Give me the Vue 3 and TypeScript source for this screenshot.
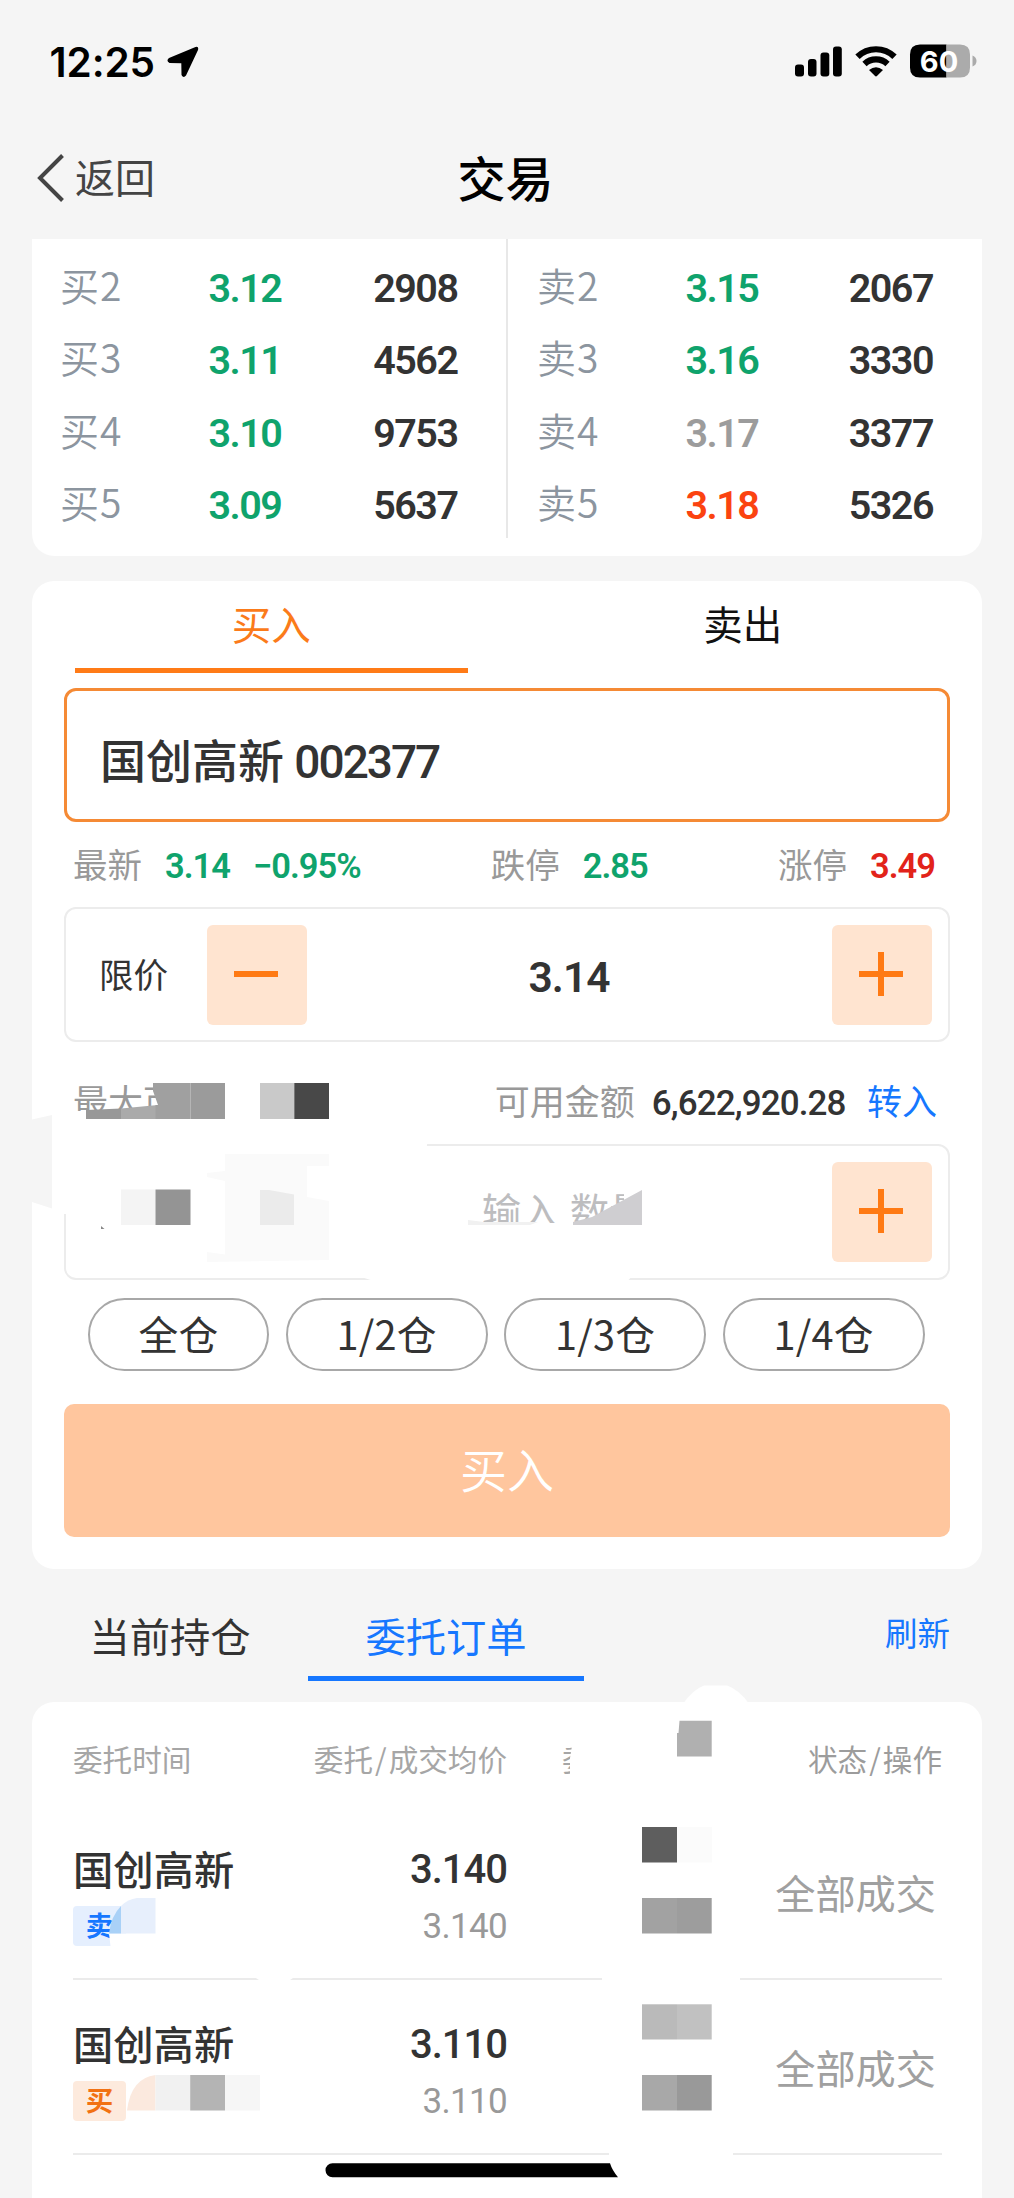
<script setup lang="ts">
interface Level {
  label: string
  price: string
  volume: string
  tone: 'down' | 'flat' | 'up'
}

interface Order {
  name: string
  side: '买' | '卖'
  price: string
  average: string
  status: string
}

interface Block {
  x: number
  y: number
  w: number
  h: number
  fill: string
}

const bids: Level[] = [
  { label: '买2', price: '3.12', volume: '2908', tone: 'down' },
  { label: '买3', price: '3.11', volume: '4562', tone: 'down' },
  { label: '买4', price: '3.10', volume: '9753', tone: 'down' },
  { label: '买5', price: '3.09', volume: '5637', tone: 'down' },
]

const asks: Level[] = [
  { label: '卖2', price: '3.15', volume: '2067', tone: 'down' },
  { label: '卖3', price: '3.16', volume: '3330', tone: 'down' },
  { label: '卖4', price: '3.17', volume: '3377', tone: 'flat' },
  { label: '卖5', price: '3.18', volume: '5326', tone: 'up' },
]

const portions: string[] = ['全仓', '1/2仓', '1/3仓', '1/4仓']

const orders: Order[] = [
  { name: '国创高新', side: '卖', price: '3.140', average: '3.140', status: '全部成交' },
  { name: '国创高新', side: '买', price: '3.110', average: '3.110', status: '全部成交' },
]

// Privacy mosaic tiles
const tiles: Block[] = [
  { x: 190.5, y: 1083, w: 34.5, h: 36, fill: '#9b9b9b' },
  { x: 260, y: 1083, w: 34.3, h: 36, fill: '#c9c9c9' },
  { x: 294.3, y: 1083, w: 34.7, h: 36, fill: '#484848' },
  { x: 121, y: 1189.5, w: 34.5, h: 35.5, fill: '#f4f4f4' },
  { x: 155.5, y: 1189.5, w: 35, h: 35.5, fill: '#949494' },
  { x: 642, y: 1827, w: 35, h: 35.5, fill: '#5e5e5e' },
  { x: 677, y: 1827, w: 35, h: 35.5, fill: '#fbfbfb' },
  { x: 642, y: 1898, w: 35, h: 35.5, fill: '#a2a2a2' },
  { x: 677, y: 1898, w: 34.7, h: 35.5, fill: '#9d9d9d' },
  { x: 642, y: 2004.3, w: 35, h: 35.2, fill: '#bababa' },
  { x: 677, y: 2004.3, w: 34.7, h: 35.2, fill: '#c1c1c1' },
  { x: 642, y: 2075, w: 35, h: 35.5, fill: '#a8a8a8' },
  { x: 677, y: 2075, w: 34.7, h: 35.5, fill: '#999999' },
  { x: 155.5, y: 2075, w: 34.7, h: 35.5, fill: '#f1f1f1' },
  { x: 190.2, y: 2075, w: 34.8, h: 35.5, fill: '#b4b4b4' },
  { x: 225, y: 2075, w: 35, h: 35.5, fill: '#f6f6f6' },
]
</script>

<template>
  <main class="screen">
    <header class="status">
      <span class="clock">12:25</span>
      <svg class="arrow" width="32" height="32" viewBox="0 0 32 32">
        <path d="M28.5 1 Q32 0 31 4 L19 29.5 Q16.5 32.5 14.5 29 L14.3 17.3 L2.5 17 Q-1.3 15 2 12 Z" />
      </svg>
      <svg class="radio" width="182" height="36" viewBox="0 0 182 36">
        <rect x="0" y="20.500" width="9" height="12" rx="3" />
        <rect x="13" y="15" width="8.500" height="17.500" rx="3" />
        <rect x="25.500" y="8.500" width="8.800" height="24" rx="3" />
        <rect x="38" y="2.500" width="8.800" height="30" rx="3" />
        <g fill="none" stroke="#000" stroke-width="6.200">
          <path d="M62.500 12.800 A26.500 26.500 0 0 1 99.500 12.800" />
          <path d="M69.500 20 A16.800 16.800 0 0 1 92.500 20" />
        </g>
        <path d="M74 26 Q81 20.500 88 26 L82.200 31.800 Q81 33 79.800 31.800 Z" />
        <path d="M125 0.500 H151.500 V33.500 H125 Q115 33.500 115 23.500 V10.500 Q115 0.500 125 0.500 Z" />
        <path d="M151.500 0.500 H165 Q175 0.500 175 10.500 V23.500 Q175 33.500 165 33.500 H151.500 Z" fill="#ababab" />
        <path d="M177.500 11.500 Q181.500 13 181.500 17 Q181.500 21 177.500 22.500 Z" fill="#ababab" />
        <text x="144" y="28" text-anchor="middle" class="charge">60</text>
      </svg>
    </header>

    <nav class="nav">
      <span class="back">
        <svg width="28" height="48" viewBox="0 0 28 48">
          <path d="M25.500 1.500 L3 24 L25.500 46.500" fill="none" stroke="#444" stroke-width="4" />
        </svg>
        <span>返回</span>
      </span>
      <h1>交易</h1>
    </nav>

    <section class="book">
      <div class="side bids">
        <div v-for="l in bids" :key="l.label" class="level">
          <span class="lv">{{ l.label }}</span>
          <span class="num" :class="l.tone">{{ l.price }}</span>
          <span class="num">{{ l.volume }}</span>
        </div>
      </div>
      <div class="side asks">
        <div v-for="l in asks" :key="l.label" class="level">
          <span class="lv">{{ l.label }}</span>
          <span class="num" :class="l.tone">{{ l.price }}</span>
          <span class="num">{{ l.volume }}</span>
        </div>
      </div>
    </section>

    <section class="trade">
      <div class="tabs">
        <div class="tab active">买入</div>
        <div class="tab">卖出</div>
      </div>
      <div class="stock">国创高新 <b>002377</b></div>
      <div class="quote">
        <div>最新<b class="down">3.14</b><b class="down">−0.95%</b></div>
        <div>跌停<b class="down">2.85</b></div>
        <div>涨停<b class="limit">3.49</b></div>
      </div>
      <div class="stepper">
        <span class="kind">限价</span>
        <button class="step">
          <svg width="44" height="44" viewBox="0 0 44 44"><path d="M0 22H44" /></svg>
        </button>
        <span class="value">3.14</span>
        <button class="step">
          <svg width="44" height="44" viewBox="0 0 44 44"><path d="M0 22H44M22 0V44" /></svg>
        </button>
      </div>
      <div class="funds">
        <span class="most">最大可</span>
        <span>可用金额</span>
        <b>6,622,920.28</b>
        <a>转入</a>
      </div>
      <div class="stepper amount">
        <span class="hint">输入 数量</span>
        <button class="step">
          <svg width="44" height="44" viewBox="0 0 44 44"><path d="M0 22H44M22 0V44" /></svg>
        </button>
      </div>
      <div class="portions">
        <span v-for="p in portions" :key="p" class="pill">{{ p }}</span>
      </div>
      <button class="submit">买入</button>
    </section>

    <div class="views">
      <div class="view">当前持仓</div>
      <div class="view current">委托订单</div>
      <a class="refresh">刷新</a>
    </div>

    <section class="orders">
      <div class="head">
        <span>委托时间</span>
        <span class="right">委托<i>/</i>成交均价</span>
        <span class="qty">委</span>
        <span class="right">状态<i>/</i>操作</span>
      </div>
      <div v-for="o in orders" :key="o.price" class="order">
        <div>
          <div class="name">{{ o.name }}</div>
          <div class="tag" :class="{ sell: o.side === '卖' }">{{ o.side }}</div>
        </div>
        <div class="prices">
          <div class="price">{{ o.price }}</div>
          <div class="average">{{ o.average }}</div>
        </div>
        <div class="state">{{ o.status }}</div>
      </div>
    </section>

    <svg class="overlay" width="1014" height="2198" viewBox="0 0 1014 2198">
      <!-- erased areas -->
      <g fill="#fff">
        <path d="M60 1140 H428 L426 1150 H76 V1214 H60 Z" />
        <path d="M358 1276 L380 1272 H625 L632 1276 L626 1283 H380 Z" />
        <rect x="70" y="1111" width="260" height="14" />
        <path d="M109 1933.500 H160 V1950 H111 Z" />
        <path d="M253 1976 L262 1982 H287 L296 1976 Z" />
        <rect x="602" y="1974" width="138" height="10" />
        <rect x="609" y="2149" width="124" height="10" />
        <rect x="222" y="2059" width="14" height="8" />
        <path d="M683 1704 Q692 1690 704 1685.500 H727 Q740 1690 749 1704 Z" />
        <rect x="464" y="1223" width="200" height="20" />
        <path d="M624 1180 H664 V1240 H624 Z" />
        <path d="M573 1740 H600 V1780 H570 V1758 Z" />
      </g>
      <path d="M32 1119.500 L52 1115 V1208.500 L32 1202 Z" fill="#f5f5f5" />
      <path
        d="M225 1154 H329 V1166 H307 V1197 L329 1201 V1260 L207 1262 V1252 L225 1254.500 V1181 L207 1177 V1173 L225 1171 Z"
        fill="#fafafa"
      />
      <path d="M260 1190 H269 L294 1194.500 V1225 H260 Z" fill="#ebebeb" />
      <path d="M101 1226 L104.500 1229 H101 Z" fill="#888" />
      <path d="M468 1220 L484 1222 H538 L530 1225 H468 Z" fill="#f1f1f1" />
      <path d="M86 1110 L121 1108.500 V1119 H86 Z" fill="#989898" />
      <path d="M121 1108.500 L158 1105 V1119 H121 Z" fill="#aaaaaa" />
      <path d="M153 1083 H190.500 V1119 H155.500 L155.500 1105 L158 1105 L153 1091 Z" fill="#a0a0a0" />
      <path d="M573 1225 V1222 L592 1217 L642 1190 V1225 Z" fill="#cfced1" />
      <path d="M679.500 1720.700 H711.700 V1756.500 H677 V1733 H678.500 Z" fill="#b0b0b0" />
      <path d="M109 1933.500 Q111 1916 121 1906 V1933.500 Z" fill="#a9d1f7" />
      <path d="M121 1906 Q128 1899 137 1898 H155.500 V1933.500 H121 Z" fill="#e7effc" />
      <path d="M127 2110.500 Q131 2078 155.500 2075 V2110.500 Z" fill="#fbe9de" />
      <rect v-for="(t, i) in tiles" :key="i" :x="t.x" :y="t.y" :width="t.w" :height="t.h" :fill="t.fill" />
      <!-- home indicator -->
      <path d="M332.500 2163.300 H610 Q612 2170 618 2177.300 H332.500 A7 7 0 0 1 332.500 2163.300 Z" fill="#000" />
    </svg>
  </main>
</template>

<style>
body {
  background: #f5f5f5;
}
</style>

<style scoped>
* {
  box-sizing: border-box;
}

.screen {
  position: relative;
  width: 1014px;
  height: 2198px;
  overflow: hidden;
  background: #f5f5f5;
  color: #333;
  font-family: 'Noto Sans CJK SC', sans-serif;
}

b {
  font-family: Roboto, sans-serif;
  font-weight: 500;
}

i {
  margin: 0 2px;
  font-style: normal;
}

button {
  border: 0;
  padding: 0;
  font-family: inherit;
}

.down {
  color: #0fa36c;
}

.flat {
  color: #9c9c9c;
}

.up {
  color: #fb4310;
}

.limit {
  color: #e2231a;
}

.status {
  display: flex;
  align-items: center;
  height: 124px;
  padding: 0 37px 0 49.5px;
}

.clock {
  padding-top: 1px;
  font: 600 40.5px/50px Inter, sans-serif;
  letter-spacing: -0.1px;
  color: #000;
}

.arrow {
  margin-left: 12px;
}

.radio {
  margin-left: auto;
}

.charge {
  font: 700 29px Inter, sans-serif;
  fill: #fff;
}

.nav {
  display: grid;
  grid-template-columns: 1fr auto 1fr;
  align-items: center;
  height: 103px;
  margin-bottom: 12px;
  padding: 0 40px 0 37px;
}

.back {
  display: flex;
  align-items: center;
  gap: 10px;
  font-size: 40px;
  line-height: 60px;
  color: #444;
}

.back svg {
  margin-top: 5px;
}

h1 {
  margin: 0;
  font-size: 48px;
  line-height: 60px;
  font-weight: 500;
  color: #000;
}

.book {
  display: grid;
  grid-template-columns: 475px 475px;
  height: 317px;
  margin: 0 32px 25px;
  padding-top: 12px;
  border-radius: 0 0 22px 22px;
  background: linear-gradient(#e8e8e8, #e8e8e8) 474px 0 / 2px 299px no-repeat #fff;
}

.bids {
  padding: 0 50.5px 0 28px;
}

.asks {
  padding: 0 50px 0 30px;
}

.level {
  display: grid;
  grid-template-columns: 148.5px 1fr auto;
  align-items: center;
  height: 72.3px;
}

.lv {
  margin-top: -6px;
  font-size: 39px;
  font-weight: 350;
  letter-spacing: 1px;
  line-height: 56px;
  color: #8c959f;
}

.num {
  margin-top: 4px;
  margin-right: -1px;
  font: 600 39.5px/50px Roboto, sans-serif;
  letter-spacing: -1.5px;
}

.trade {
  height: 987.5px;
  margin: 0 32px;
  padding: 0 32px;
  border-radius: 22px;
  background: #fff;
}

.tabs {
  display: grid;
  grid-template-columns: 1fr 1fr;
  height: 92px;
  margin: 0 -28.5px;
}

.tab {
  font-size: 39.5px;
  line-height: 84px;
  text-align: center;
  color: #111;
}

.tab.active {
  color: #fb7b1a;
}

.tab.active::after {
  content: '';
  display: block;
  width: 393px;
  height: 5px;
  margin: 3px auto 0;
  background: #ff7b17;
}

.stock {
  height: 133.5px;
  margin-top: 15px;
  padding: 4px 33px 0;
  border: 3px solid #f58a35;
  border-radius: 12px;
  font-size: 46px;
  font-weight: 500;
  line-height: 127px;
  white-space: pre;
}

.stock b {
  font-size: 46px;
  letter-spacing: -2px;
}

.quote {
  display: flex;
  justify-content: space-between;
  align-items: center;
  height: 85px;
  padding: 0 15px 2px 9px;
  font-size: 34.5px;
  color: #999;
}

.quote div {
  display: flex;
  align-items: baseline;
}

.quote b {
  margin-left: 23px;
  font-size: 34.5px;
  font-weight: 600;
  letter-spacing: -1px;
}

.stepper {
  display: flex;
  align-items: center;
  height: 135.5px;
  padding: 0 16.5px 0 33px;
  border: 2px solid #ececec;
  border-radius: 12px;
}

.kind {
  width: 107.5px;
  padding-bottom: 2px;
  font-size: 34.5px;
}

.step {
  display: grid;
  place-items: center;
  width: 100px;
  height: 100px;
  margin-top: 1px;
  padding-bottom: 2px;
  padding-right: 2px;
  border-radius: 6px;
  background: #ffe4d0;
}

.step path {
  stroke: #ff7a14;
  stroke-width: 6;
}

.value {
  flex: 1;
  padding-top: 7px;
  font: 600 42.5px/60px Roboto, sans-serif;
  letter-spacing: -1px;
  text-align: center;
}

.funds {
  display: flex;
  align-items: baseline;
  height: 102px;
  padding: 33px 13px 0 9px;
  font-size: 35px;
  line-height: 50px;
  color: #999;
}

.most {
  margin-right: auto;
}

.funds b {
  margin: 0 21.5px 0 17px;
  color: #333;
  letter-spacing: -0.9px;
}

.funds a {
  color: #1677ff;
}

.hint {
  flex: 1;
  padding-bottom: 5px;
  margin-left: 200px;
  font-size: 39.5px;
  text-align: center;
  color: #bdbdbf;
}

.portions {
  display: flex;
  gap: 16.5px;
  margin: 18.5px 24px 33px;
}

.pill {
  flex: none;
  width: 202px;
  height: 73px;
  border: 2px solid #a8a8a8;
  border-radius: 37px;
  font-size: 39.7px;
  letter-spacing: 0.2px;
  line-height: 66px;
  text-align: center;
}

.pill:first-child {
  width: 181px;
}

.submit {
  display: block;
  width: 100%;
  height: 133px;
  padding-bottom: 6px;
  border-radius: 10px;
  background: #ffc69e;
  color: #fff;
  font-size: 47px;
  font-weight: 350;
}

.views {
  display: flex;
  height: 133.5px;
  padding: 39px 64px 0 32px;
}

.view {
  width: 276px;
  font-size: 40.3px;
  line-height: 53px;
  text-align: center;
}

.current {
  color: #1677ff;
}

.current::after {
  content: '';
  display: block;
  height: 5px;
  margin-top: 15px;
  background: #1677ff;
}

.refresh {
  margin-left: auto;
  font-size: 32.5px;
  line-height: 48px;
  color: #1677ff;
}

.orders {
  height: 520px;
  margin: 0 32px;
  padding: 0 40px 0 41px;
  border-radius: 22px;
  background: #fff;
}

.head {
  display: grid;
  grid-template-columns: 217px 217px 64px 1fr;
  height: 103px;
  padding-top: 10px;
  font-size: 29.6px;
  line-height: 93px;
  color: #a6a6a6;
}

.right {
  text-align: right;
}

.head .right:last-child {
  margin-left: -40px;
  color: #9c9c9c;
}

.qty {
  padding-left: 55px;
  white-space: nowrap;
}

.order {
  display: grid;
  grid-template-columns: 217px 217px 1fr;
  height: 175px;
  border-bottom: 2px solid #ebebeb;
}

.name {
  padding-top: 37.5px;
  font-size: 40.3px;
  font-weight: 500;
  line-height: 50px;
}

.tag {
  width: 53px;
  height: 40px;
  margin-top: 13px;
  border-radius: 4px;
  background: #fdeadd;
  font-size: 27.5px;
  font-weight: 700;
  line-height: 37px;
  text-align: center;
  color: #f27112;
}

.tag.sell {
  background: #e5effe;
  color: #1677ff;
}

.prices {
  padding-top: 39.5px;
  font: 500 40px/50px Roboto, sans-serif;
  letter-spacing: -1px;
  text-align: right;
}

.average {
  margin-top: 7.5px;
  font-size: 35px;
  font-weight: 400;
  letter-spacing: -0.7px;
  color: #999;
}

.state {
  padding-right: 6px;
  font-size: 40.2px;
  font-weight: 400;
  line-height: 173px;
  text-align: right;
  color: #a0a0a0;
}

.overlay {
  position: absolute;
  top: 0;
  left: 0;
  pointer-events: none;
}
</style>
